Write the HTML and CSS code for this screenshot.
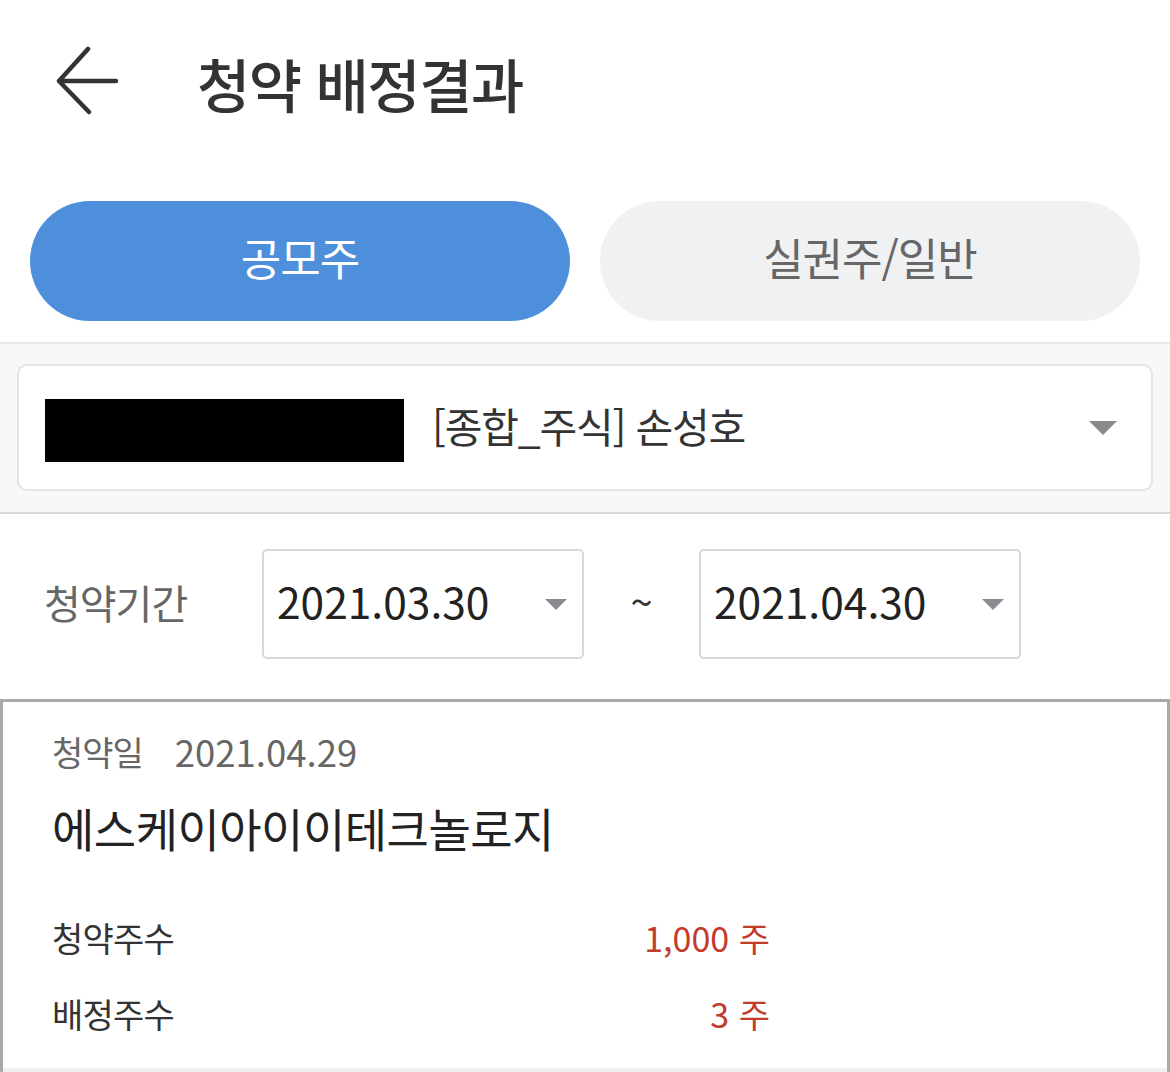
FILE: index.html
```html
<!DOCTYPE html>
<html lang="ko">
<head>
<meta charset="utf-8">
<title>청약 배정결과</title>
<link rel="stylesheet" href="styles.css">
</head>
<body>
<div class="page">
  <header class="header">
    <svg class="back" viewBox="0 0 68 70" width="68" height="70" aria-hidden="true">
      <path d="M34 3 L5 35 L35 66 M5 35 L62 35" fill="none" stroke="#333" stroke-width="4.5" stroke-linecap="round" stroke-linejoin="round"/>
    </svg>
    <h1 class="title">청약 배정결과</h1>
  </header>

  <nav class="tabs">
    <div class="tab tab-active">공모주</div>
    <div class="tab">실권주/일반</div>
  </nav>

  <section class="account">
    <div class="account-card">
      <div class="redact"></div>
      <div class="account-name">[종합_주식] 손성호</div>
      <span class="caret caret-lg"></span>
    </div>
  </section>

  <section class="period">
    <div class="period-label">청약기간</div>
    <div class="datebox"><span class="date">2021.03.30</span><span class="caret"></span></div>
    <div class="tilde">~</div>
    <div class="datebox"><span class="date">2021.04.30</span><span class="caret"></span></div>
  </section>

  <section class="result">
    <div class="result-head"><span class="rh-label">청약일</span><span class="rh-date">2021.04.29</span></div>
    <div class="company">에스케이아이이테크놀로지</div>
    <div class="row row-first"><span class="row-label">청약주수</span><span class="row-value">1,000 주</span></div>
    <div class="row"><span class="row-label">배정주수</span><span class="row-value">3 주</span></div>
    <div class="result-foot"></div>
  </section>
</div>
</body>
</html>
```

FILE: styles.css
```css
* { box-sizing: border-box; }
html, body { margin: 0; padding: 0; background: #fff; }
body {
  font-family: "Noto Sans CJK KR", "Noto Sans", sans-serif;
  color: #333;
  width: 1170px;
}
.page { width: 1170px; overflow: hidden; }

.header {
  height: 166px;
  display: flex;
  align-items: center;
  padding-left: 54px;
}
.back { display: block; margin-top: -4px; }
.title {
  margin: 0 0 0 75px;
  font-size: 58px;
  font-weight: 500;
  letter-spacing: -1.5px;
  line-height: 70px;
  color: #333;
}

.tabs {
  display: flex;
  gap: 30px;
  padding: 35px 30px 21px;
}
.tab {
  flex: 1;
  height: 120px;
  border-radius: 60px;
  background: #f0f1f3;
  color: #666;
  font-size: 44px;
  letter-spacing: -1px;
  display: flex;
  align-items: center;
  justify-content: center;
  padding-bottom: 8px;
}
.tab-active {
  background: #4d8fdb;
  color: #fff;
}

.account {
  background: #f7f8fa;
  border-top: 2px solid #e6e7e9;
  border-bottom: 2px solid #d8d9db;
  padding: 20px 17px 21px;
}
.account-card {
  height: 127px;
  background: #fff;
  border: 2px solid #e3e4e6;
  border-radius: 10px;
  display: flex;
  align-items: center;
  padding: 0 34px 0 26px;
}
.redact {
  width: 359px;
  height: 63px;
  background: #000;
  margin-top: 6px;
}
.account-name {
  margin-left: 28px;
  margin-bottom: 6px;
  flex: 1;
  font-size: 41px;
  letter-spacing: -1.2px;
  color: #333;
}
.caret {
  width: 0;
  height: 0;
  border-left: 11px solid transparent;
  border-right: 11px solid transparent;
  border-top: 11px solid #888b90;
}
.caret-lg {
  border-left-width: 14px;
  border-right-width: 14px;
  border-top-width: 14px;
  border-top-color: #8a8a8a;
}

.period {
  display: flex;
  align-items: center;
  padding: 35px 0 40px 44px;
}
.period-label {
  width: 218px;
  font-size: 40px;
  letter-spacing: -1px;
  color: #666;
  margin-bottom: 4px;
}
.datebox {
  width: 322px;
  height: 110px;
  border: 2px solid #d6d8db;
  border-radius: 5px;
  display: flex;
  align-items: center;
  justify-content: space-between;
  padding: 0 15px 0 13px;
}
.date {
  font-size: 42.5px;
  color: #222;
  margin-bottom: 8px;
}
.tilde {
  width: 115px;
  text-align: center;
  font-size: 40px;
  color: #333;
  margin-bottom: 6px;
}

.result {
  border: 3px solid #a9a9a9;
  border-bottom: none;
  padding-top: 25px;
}
.result-head {
  height: 50px;
  display: flex;
  align-items: center;
  padding-left: 49px;
  color: #666;
}
.rh-label { font-size: 34px; letter-spacing: -1px; margin-bottom: 2px; }
.rh-date { font-size: 36.5px; margin-left: 32px; margin-bottom: 2px; }
.company {
  margin-top: 20px;
  height: 60px;
  line-height: 60px;
  padding-left: 49px;
  font-size: 46px;
  color: #222;
  letter-spacing: -0.5px;
}
.row {
  width: 767px;
  height: 60px;
  display: flex;
  align-items: center;
  justify-content: space-between;
  padding-left: 49px;
  margin-top: 16px;
}
.row-first { margin-top: 50px; }
.row-label { font-size: 34px; letter-spacing: -0.8px; color: #333; }
.row-value { font-size: 34px; color: #c23b2b; }
.result-foot {
  margin-top: 25px;
  height: 10px;
  background: #f1f1f1;
}
```
